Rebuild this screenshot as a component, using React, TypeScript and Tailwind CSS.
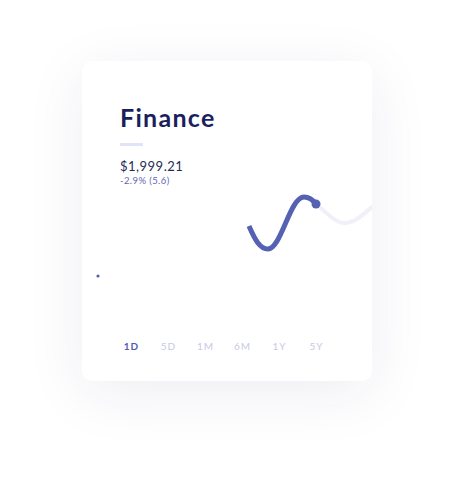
import React, { useState } from "react";

const ranges = ["1D", "5D", "1M", "6M", "1Y", "5Y"];

export default function App() {
    const [active, setActive] = useState("1D");

    return (
        <div className="w-[455px] h-[483px] bg-white pt-[61px] pl-[82px] font-['Lato',sans-serif]">
            <div className="w-[290px] h-[320px] rounded-[10px] bg-white flex flex-col overflow-hidden shadow-[0_12px_60px_rgba(40,40,100,0.08)]">
                <div className="h-[129px] pl-[38px] pt-[44px] flex flex-col">
                    <h1 className="text-[25px] leading-[25px] font-bold tracking-[1.3px] text-[#1b1f5c]">
                        Finance
                    </h1>
                    <div className="w-[23px] h-[3px] bg-[#dfe5f7] mt-[13px]" />
                    <p className="mt-[12px] text-[13px] leading-[16px] tracking-[0.5px] text-[#262b58]">
                        $1,999.21
                    </p>
                    <p className="mt-[1px] text-[9.5px] leading-[12px] tracking-[0.4px] text-[#5f67b6]">
                        -2.9% (5.6)
                    </p>
                </div>

                <svg className="block w-[290px] h-[100px]" viewBox="82 190 290 100">
                    <path
                        d="M316,204 C326,212 335,223 345,223 C356,223 365,212 376,204"
                        fill="none" stroke="#f0f0f8" strokeWidth="4" strokeLinecap="round" />
                    <path
                        d="M249,226 C255,240 260,249 268,249 C281,249 290,197 304,197 C310,197 313,200 316,204"
                        fill="none" stroke="#5561b3" strokeWidth="5" strokeLinecap="butt" />
                    <circle cx="316" cy="204" r="4.5" fill="#5561b3" />
                    <circle cx="98" cy="276" r="1.6" fill="#5561b3" />
                </svg>

                <div className="mt-[46px] h-[20px] pl-[31px] flex items-center">
                    {ranges.map((r) => (
                        <button key={r}
                        onClick={() => setActive(r)}
                        className={`w-[37px] text-center text-[10px] tracking-[1px] ${active === r ? "text-[#4f5bb5] font-bold" : "text-[#c6c9e6]"}`}>
                            {r}
                        </button>
                    ))}
                </div>
            </div>
        </div>
    );
}
